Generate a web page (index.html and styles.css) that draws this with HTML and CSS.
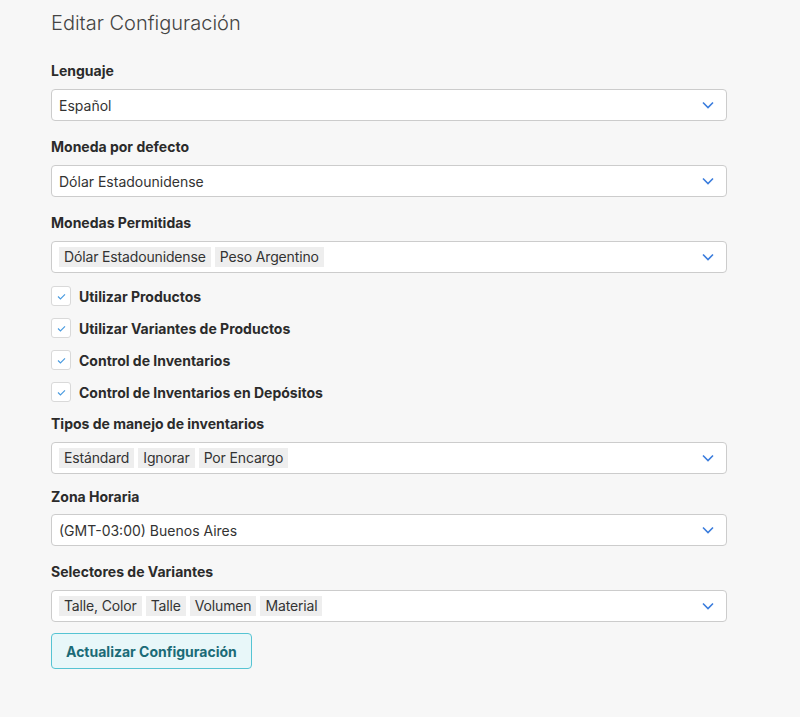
FILE: index.html
```html
<!DOCTYPE html>
<html lang="es">
<head>
  <meta charset="UTF-8" />
  <meta name="viewport" content="width=device-width, initial-scale=1" />
  <title>Editar Configuración</title>
  <link rel="stylesheet" href="styles.css">
</head>
<body>

<main class="page">
  <h1 class="title">Editar Configuración</h1>

  <form class="settings">
    <div class="field">
      <label class="field-label">Lenguaje</label>
      <div class="select">
        <span class="value">Español</span>
        <svg class="chevron" viewBox="0 0 12 8"><path d="M1 1.5l5 5 5-5" /></svg>
      </div>
    </div>

    <div class="field">
      <label class="field-label">Moneda por defecto</label>
      <div class="select">
        <span class="value">Dólar Estadounidense</span>
        <svg class="chevron" viewBox="0 0 12 8"><path d="M1 1.5l5 5 5-5" /></svg>
      </div>
    </div>

    <div class="field">
      <label class="field-label">Monedas Permitidas</label>
      <div class="select multi">
        <div class="tags">
          <span class="tag">Dólar Estadounidense</span>
          <span class="tag">Peso Argentino</span>
        </div>
        <svg class="chevron" viewBox="0 0 12 8"><path d="M1 1.5l5 5 5-5" /></svg>
      </div>
    </div>

    <div class="checks">
      <label class="check-row">
        <span class="box"><svg viewBox="0 0 10 8"><path d="M1 4l2.8 2.8L9 1.5" /></svg></span>
        Utilizar Productos
      </label>
      <label class="check-row">
        <span class="box"><svg viewBox="0 0 10 8"><path d="M1 4l2.8 2.8L9 1.5" /></svg></span>
        Utilizar Variantes de Productos
      </label>
      <label class="check-row">
        <span class="box"><svg viewBox="0 0 10 8"><path d="M1 4l2.8 2.8L9 1.5" /></svg></span>
        Control de Inventarios
      </label>
      <label class="check-row">
        <span class="box"><svg viewBox="0 0 10 8"><path d="M1 4l2.8 2.8L9 1.5" /></svg></span>
        Control de Inventarios en Depósitos
      </label>
    </div>

    <div class="field">
      <label class="field-label">Tipos de manejo de inventarios</label>
      <div class="select multi">
        <div class="tags">
          <span class="tag">Estándard</span>
          <span class="tag">Ignorar</span>
          <span class="tag">Por Encargo</span>
        </div>
        <svg class="chevron" viewBox="0 0 12 8"><path d="M1 1.5l5 5 5-5" /></svg>
      </div>
    </div>

    <div class="field tight">
      <label class="field-label">Zona Horaria</label>
      <div class="select">
        <span class="value">(GMT-03:00) Buenos Aires</span>
        <svg class="chevron" viewBox="0 0 12 8"><path d="M1 1.5l5 5 5-5" /></svg>
      </div>
    </div>

    <div class="field">
      <label class="field-label">Selectores de Variantes</label>
      <div class="select multi">
        <div class="tags">
          <span class="tag">Talle, Color</span>
          <span class="tag">Talle</span>
          <span class="tag">Volumen</span>
          <span class="tag">Material</span>
        </div>
        <svg class="chevron" viewBox="0 0 12 8"><path d="M1 1.5l5 5 5-5" /></svg>
      </div>
    </div>

    <button type="button" class="submit">Actualizar Configuración</button>
  </form>
</main>

</body>
</html>
```

FILE: styles.css
```css
body {
  margin: 0;
  background: #f7f7f7;
  font-family: Inter, "Noto Sans", sans-serif;
  font-size: 14px;
  color: #333;
}

.page {
  width: 676px;
  padding: 10px 51px 40px;
}

.title {
  margin: 0 0 25px;
  font-size: 20px;
  line-height: 26px;
  font-weight: 300;
  color: #444;
}

.field {
  margin-bottom: 16px;
}

.field.tight {
  margin-top: -3px;
}

.field-label {
  display: block;
  font-weight: 700;
  line-height: 20px;
  margin-bottom: 8px;
  color: #2b2b2b;
}

.field.tight .field-label {
  margin-bottom: 7px;
}

.select {
  display: flex;
  align-items: center;
  justify-content: space-between;
  height: 32px;
  box-sizing: border-box;
  padding: 0 12px 0 7px;
  background: #fff;
  border: 1px solid #ccc;
  border-radius: 4px;
}

.value {
  color: #333;
}

.tags {
  display: flex;
  gap: 4px;
}

.tag {
  background: #eeeeee;
  padding: 0 5px;
  line-height: 20px;
  color: #333;
  letter-spacing: -0.15px;
}

.chevron {
  width: 12px;
  height: 8px;
  fill: none;
  stroke: #3b7ddd;
  stroke-width: 1.6;
}

.checks {
  display: flex;
  flex-direction: column;
  gap: 12px;
  margin: -3px 0 12px;
}

.check-row {
  display: flex;
  align-items: center;
  gap: 8px;
  height: 20px;
  font-weight: 700;
  color: #2b2b2b;
}

.box {
  display: flex;
  align-items: center;
  justify-content: center;
  width: 20px;
  height: 20px;
  box-sizing: border-box;
  background: #fff;
  border: 1px solid #d9d9d9;
  border-radius: 3px;
}

.box svg {
  width: 9px;
  height: 7px;
  fill: none;
  stroke: #4a9be0;
  stroke-width: 1.3;
}

.submit {
  margin-top: -5px;
  height: 36px;
  padding: 0 14px;
  background: #e8f7f9;
  border: 1px solid #56c4d3;
  border-radius: 4px;
  font-family: inherit;
  font-size: 14px;
  font-weight: 700;
  color: #1b6b77;
}
```
